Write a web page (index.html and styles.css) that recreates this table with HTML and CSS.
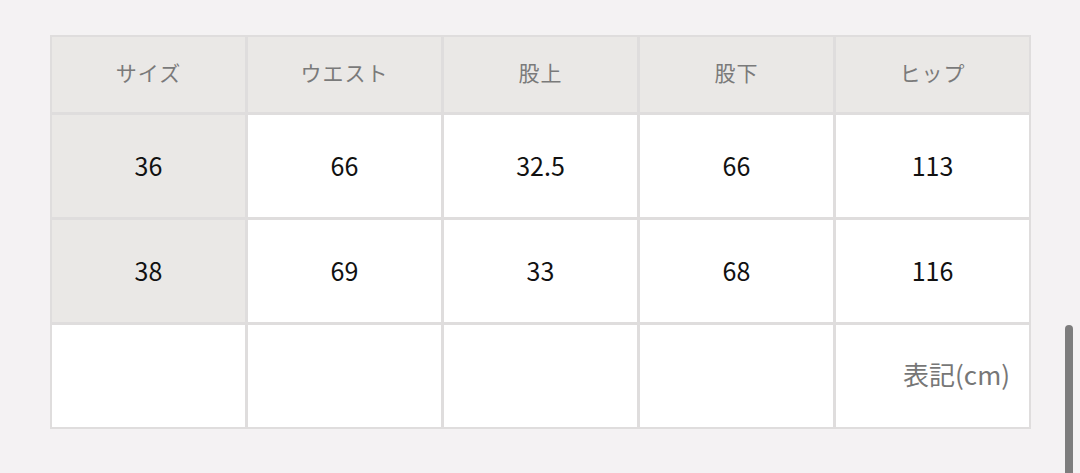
FILE: index.html
```html
<!DOCTYPE html>
<html lang="ja">
<head>
<meta charset="utf-8">
<link rel="stylesheet" href="styles.css">
</head>
<body>
<div class="page">
  <div class="size-table">
    <div class="cell head">サイズ</div>
    <div class="cell head">ウエスト</div>
    <div class="cell head">股上</div>
    <div class="cell head">股下</div>
    <div class="cell head">ヒップ</div>

    <div class="cell label">36</div>
    <div class="cell">66</div>
    <div class="cell">32.5</div>
    <div class="cell">66</div>
    <div class="cell">113</div>

    <div class="cell label">38</div>
    <div class="cell">69</div>
    <div class="cell">33</div>
    <div class="cell">68</div>
    <div class="cell">116</div>

    <div class="cell"></div>
    <div class="cell"></div>
    <div class="cell"></div>
    <div class="cell"></div>
    <div class="cell note">表記(cm)</div>
  </div>
</div>
<div class="scrollbar"></div>
</body>
</html>
```

FILE: styles.css
```css
html, body {
  margin: 0;
  padding: 0;
  background: #f4f2f3;
  height: 100%;
  overflow: hidden;
}
body {
  font-family: "Noto Sans CJK JP", "Noto Sans", sans-serif;
}
.page {
  padding: 35px 0 0 50px;
}
.size-table {
  width: 981px;
  display: grid;
  grid-template-columns: repeat(5, 1fr);
  grid-template-rows: 75px 102px 102px 102px;
  gap: 3px;
  padding: 2px;
  box-sizing: border-box;
  background: #dfdddd;
}
.cell {
  background: #ffffff;
  display: flex;
  align-items: center;
  justify-content: center;
  font-size: 25px;
  color: #111;
  padding-bottom: 2px;
}
.cell.head {
  background: #eae8e6;
  color: #7a7a7a;
  font-size: 21px;
  letter-spacing: 1px;
  padding-bottom: 5px;
}
.cell.label {
  background: #eae8e6;
}
.cell.note {
  justify-content: flex-end;
  padding-right: 19px;
  padding-bottom: 6px;
  color: #777;
  font-size: 26px;
}
.scrollbar {
  position: absolute;
  left: 1065px;
  top: 325px;
  width: 8px;
  height: 160px;
  border-radius: 4px;
  background: #7d7d7d;
}
```
